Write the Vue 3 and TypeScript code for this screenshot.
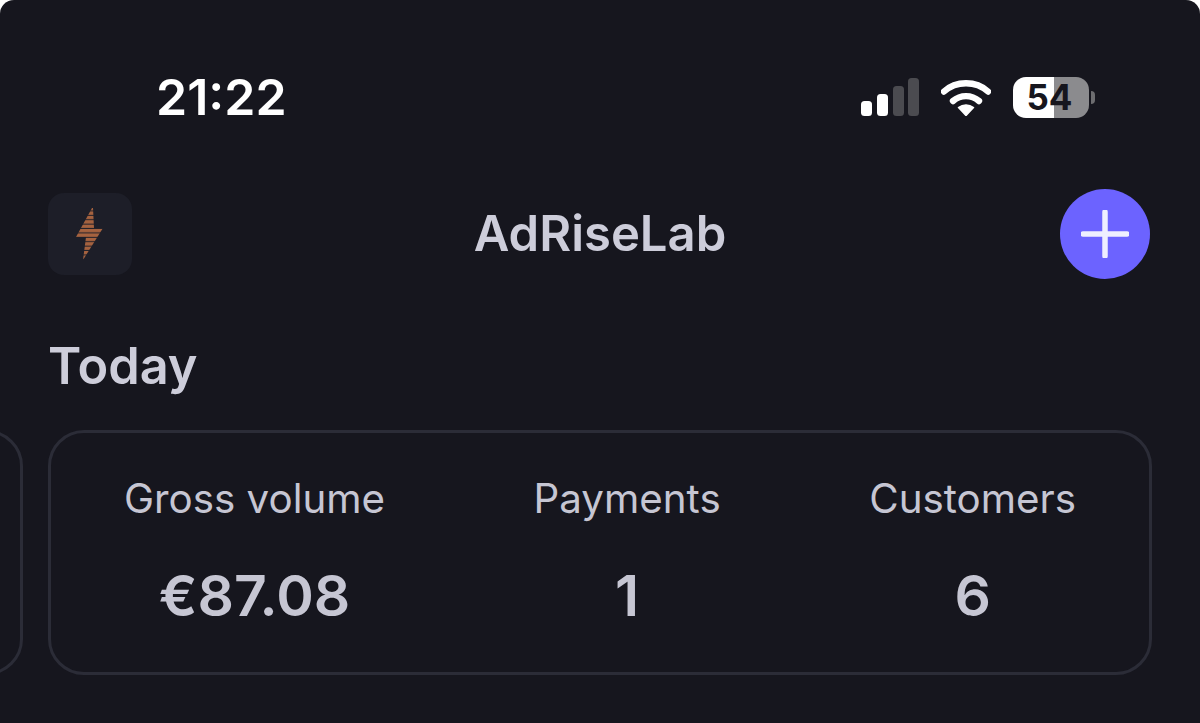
<template>
  <div class="screen">
    <div class="status">
      <span class="time">21:22</span>
      <div class="status-icons">
        <svg class="signal" width="59" height="38" viewBox="0 0 59 38">
          <rect x="0" y="23" width="11" height="15" rx="3.500" fill="#fff" />
          <rect x="16" y="16" width="11" height="22" rx="3.500" fill="#fff" />
          <rect x="32" y="8" width="11" height="30" rx="3.500" fill="#4b4b50" />
          <rect x="47" y="0" width="11" height="38" rx="3.500" fill="#4b4b50" />
        </svg>
        <svg class="wifi" width="50" height="38" viewBox="0 0 50 38" fill="none">
          <path d="M3 13.500C15 2.500 35 2.500 47 13.500" stroke="#fff" stroke-width="6.400" stroke-linecap="round" />
          <path d="M12 23C19.500 16.500 30.500 16.500 38 23" stroke="#fff" stroke-width="6.400" stroke-linecap="round" />
          <path d="M17.500 29.500C22 26 28 26 32.500 29.500L25 37.500Z" fill="#fff" stroke="#fff" stroke-width="1.500" stroke-linejoin="round" />
        </svg>
        <div class="battery">
          <div class="battery-body"><span>54</span></div>
          <div class="battery-tip"></div>
        </div>
      </div>
    </div>

    <header class="topbar">
      <div class="logo">
        <svg width="30" height="54" viewBox="0 0 30 54">
          <defs>
            <pattern id="bolt-lines" width="30" height="4.400" patternUnits="userSpaceOnUse">
              <rect width="30" height="3.400" fill="#a5623f" />
            </pattern>
          </defs>
          <path d="M17 1 L1 30 L11 30 L8 53 L28 21 L19 21 L18 1Z" fill="url(#bolt-lines)" />
        </svg>
      </div>
      <h1>AdRiseLab</h1>
      <button class="add">
        <svg width="48" height="48" viewBox="0 0 48 48">
          <path d="M24 2V46M2 24H46" stroke="#eeeeff" stroke-width="5.500" stroke-linecap="round" />
        </svg>
      </button>
    </header>

    <h2>Today</h2>

    <div class="cards">
      <div class="card-prev"></div>
      <div class="card">
        <div v-for="s in stats" :key="s.label" class="stat">
          <span class="label">{{ s.label }}</span>
          <span class="value">{{ s.value }}</span>
        </div>
      </div>
    </div>
  </div>
</template>

<script setup lang="ts">
const stats = [
  { label: 'Gross volume', value: '€87.08' },
  { label: 'Payments', value: '1' },
  { label: 'Customers', value: '6' }
]
</script>

<style scoped>
.screen {
  width: 1200px;
  height: 723px;
  overflow: hidden;
  box-sizing: border-box;
  background: #16161e;
  border-radius: 14px 14px 0 0;
  font-family: Inter, "Liberation Sans", sans-serif;
  color: #d2d2de;
}
.status {
  height: 189px;
  box-sizing: border-box;
  padding: 64px 105px 0 156px;
  display: flex;
  justify-content: space-between;
  align-items: flex-start;
}
.time {
  font-size: 50px;
  line-height: 66px;
  font-weight: 600;
  color: #fff;
}
.status-icons {
  display: flex;
  align-items: center;
  height: 66px;
}
.wifi { margin-left: 21px; }
.battery {
  margin-left: 22px;
  display: flex;
  align-items: center;
}
.battery-body {
  width: 76px;
  height: 41px;
  border-radius: 13px;
  background: linear-gradient(90deg, #fff 0 54%, #8b8b8e 54% 100%);
  display: flex;
  align-items: center;
  justify-content: center;
  padding-right: 3px;
  box-sizing: border-box;
  font-size: 35px;
  font-weight: 700;
  color: #16161e;
}
.battery-tip {
  width: 4px;
  height: 13px;
  margin-left: 2px;
  border-radius: 0 4px 4px 0;
  background: #6d6d70;
}
.topbar {
  height: 90px;
  padding: 0 50px 0 48px;
  display: grid;
  grid-template-columns: 1fr auto 1fr;
  align-items: center;
}
.logo {
  width: 84px;
  height: 82px;
  border-radius: 16px;
  background: #1d1e28;
  display: flex;
  align-items: center;
  justify-content: center;
}
h1 {
  margin: 0 0 0 2px;
  font-size: 49px;
  line-height: 60px;
  font-weight: 600;
  color: #cdcdda;
}
.add {
  justify-self: end;
  width: 90px;
  height: 90px;
  padding: 0;
  border: none;
  border-radius: 50%;
  background: #6c63ff;
  display: flex;
  align-items: center;
  justify-content: center;
}
h2 {
  margin: 57px 0 0 48px;
  font-size: 50.500px;
  line-height: 60px;
  font-weight: 600;
  color: #cdcdda;
}
.cards {
  margin-top: 34px;
  display: flex;
  gap: 25px;
  margin-left: -199px;
}
.card-prev {
  width: 222px;
  height: 245px;
  flex: none;
  box-sizing: border-box;
  border: 3px solid #2b2c37;
  border-radius: 36px;
}
.card {
  width: 1104px;
  height: 245px;
  flex: none;
  box-sizing: border-box;
  border: 3px solid #2b2c37;
  border-radius: 36px;
  padding: 0 73px;
  display: flex;
  justify-content: space-between;
  align-items: center;
}
.stat {
  display: flex;
  flex-direction: column;
  align-items: center;
  gap: 37px;
}
.label {
  font-size: 40.300px;
  line-height: 50px;
  font-weight: 400;
  color: #c6c6d3;
}
.value {
  font-size: 57px;
  line-height: 70px;
  font-weight: 600;
  color: #c6c6d3;
}
</style>

<style>
html, body { background: #fff; }
</style>
